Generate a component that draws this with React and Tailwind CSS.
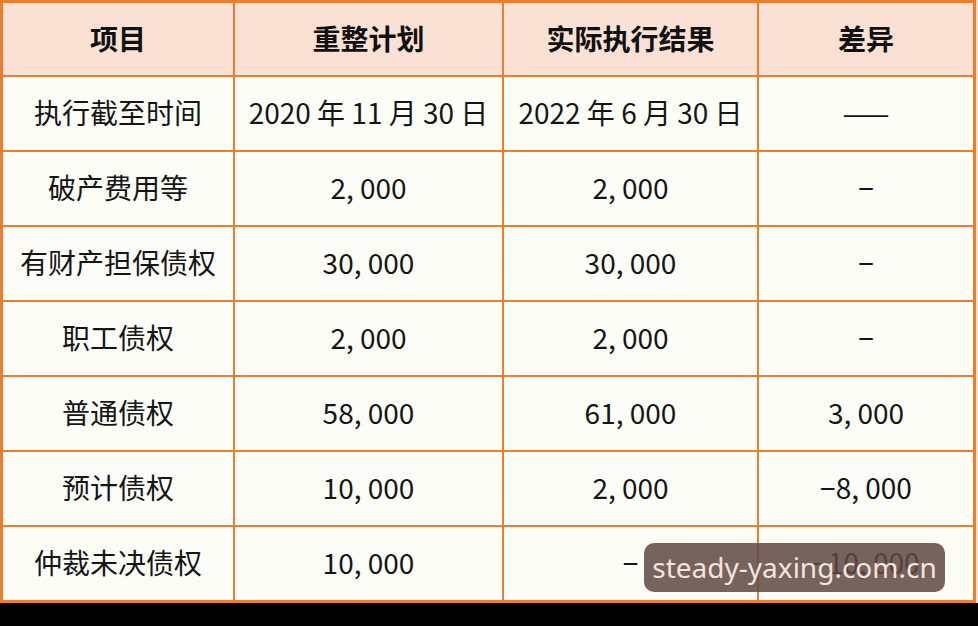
import React from 'react';

const headers = ['项目', '重整计划', '实际执行结果', '差异'];

const rows = [
  ['执行截至时间', '2020 年 11 月 30 日', '2022 年 6 月 30 日', '——'],
  ['破产费用等', '2, 000', '2, 000', '−'],
  ['有财产担保债权', '30, 000', '30, 000', '−'],
  ['职工债权', '2, 000', '2, 000', '−'],
  ['普通债权', '58, 000', '61, 000', '3, 000'],
  ['预计债权', '10, 000', '2, 000', '−8, 000'],
  ['仲裁未决债权', '10, 000', '−', '−10, 000'],
];

const App = () => {
  return (
    <div
      className="w-[978px] h-[626px] bg-black overflow-hidden"
      style={{ fontFamily: '"Noto Sans CJK SC", "Noto Sans", sans-serif' }}
    >
      <div className="relative w-[978px] bg-[#f6dccd]">
        {/* table as grid: orange background shows through the gaps as borders */}
        <div className="grid w-[976px] grid-cols-[230px_267px_253px_214px] grid-rows-[72px_repeat(7,73px)] gap-[2px] p-[3px] bg-[#ed7d31]">
          {headers.map((h) => (
            <div
              key={h}
              className="flex items-center justify-center pb-[2px] bg-[#fbe1d4] text-[28px] font-bold text-[#111]"
            >
              {h}
            </div>
          ))}
          {rows.map((row, i) =>
            row.map((cell, j) => (
              <div
                key={`${i}-${j}`}
                className="flex items-center justify-center pb-[4px] whitespace-pre bg-[#fdfdf8] text-[28px] text-[#151515]"
              >
                {cell}
              </div>
            ))
          )}
        </div>

        {/* watermark */}
        <div className="absolute left-[644px] top-[543px] w-[301px] h-[49px] rounded-[10px] bg-[#5f4843]/85 flex items-center justify-center">
          <span
            className="text-[28px] text-[#f4e4de] leading-none pb-[2px]"
            style={{ fontFamily: '"Noto Sans", sans-serif' }}
          >
            steady-yaxing.com.cn
          </span>
        </div>
      </div>
    </div>
  );
};

export default App;
